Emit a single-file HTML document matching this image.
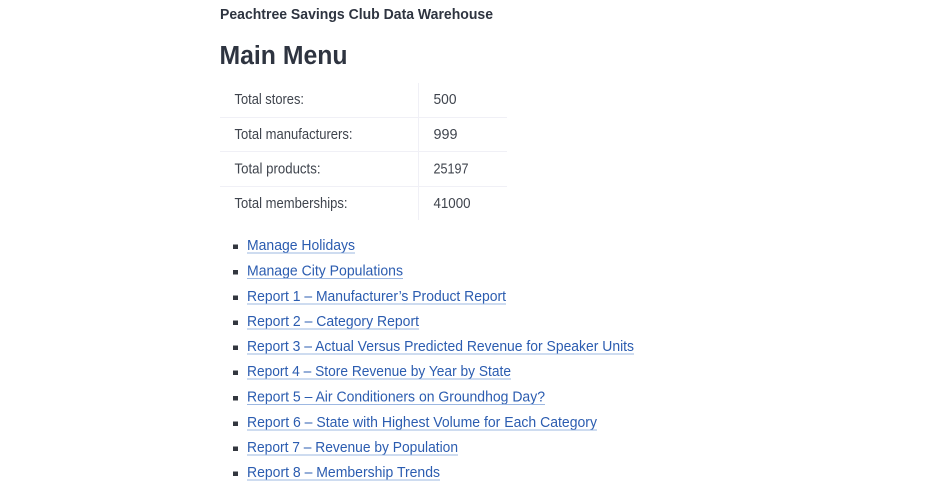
<!DOCTYPE html>
<html lang="en">
<head>
<meta charset="utf-8">
<title>Main Menu</title>
<style>
html,body{margin:0;padding:0;background:#fff;width:925px;height:500px;overflow:hidden}
svg{display:block}
text{font-family:"Liberation Sans",Arial,sans-serif}
.b{font-weight:700;fill:#2e3440}
.t{font-size:14.5px;fill:#3f444d}
.l{font-size:15px;fill:#2b5cb0}
.u{stroke:#9db8e2;stroke-width:1}
.g{stroke:#f0f0f6;stroke-width:1}
.s{fill:#33373f}
</style>
</head>
<body>
<svg width="925" height="500" viewBox="0 0 925 500" xmlns="http://www.w3.org/2000/svg">
<text class="b" x="220" y="19" font-size="14.5" textLength="273" lengthAdjust="spacingAndGlyphs">Peachtree Savings Club Data Warehouse</text>
<text class="b" x="219.500" y="64" font-size="25.5" textLength="128" lengthAdjust="spacingAndGlyphs">Main Menu</text>

<path class="g" d="M220 117.500H507M220 151.500H507M220 186.500H507M418.500 83V220" fill="none"/>
<text class="t" x="234.500" y="104" textLength="69.500" lengthAdjust="spacingAndGlyphs">Total stores:</text>
<text class="t" x="433.500" y="104" textLength="23" lengthAdjust="spacingAndGlyphs">500</text>
<text class="t" x="234.500" y="139" textLength="118" lengthAdjust="spacingAndGlyphs">Total manufacturers:</text>
<text class="t" x="433.500" y="139" textLength="24" lengthAdjust="spacingAndGlyphs">999</text>
<text class="t" x="234.500" y="173.500" textLength="86" lengthAdjust="spacingAndGlyphs">Total products:</text>
<text class="t" x="433.500" y="173.500" textLength="35" lengthAdjust="spacingAndGlyphs">25197</text>
<text class="t" x="234.500" y="208" textLength="113" lengthAdjust="spacingAndGlyphs">Total memberships:</text>
<text class="t" x="433.500" y="208" textLength="37" lengthAdjust="spacingAndGlyphs">41000</text>

<rect class="s" x="233" y="244.500" width="5" height="4.500"/>
<text class="l" x="247" y="250" textLength="108" lengthAdjust="spacingAndGlyphs">Manage Holidays</text>
<path class="u" d="M247 253H355"/>
<rect class="s" x="233" y="270" width="5" height="4.500"/>
<text class="l" x="247" y="275.500" textLength="156" lengthAdjust="spacingAndGlyphs">Manage City Populations</text>
<path class="u" d="M247 278.500H403"/>
<rect class="s" x="233" y="295.500" width="5" height="4.500"/>
<text class="l" x="247" y="301" textLength="259" lengthAdjust="spacingAndGlyphs">Report 1 – Manufacturer’s Product Report</text>
<path class="u" d="M247 304H506"/>
<rect class="s" x="233" y="320.500" width="5" height="4.500"/>
<text class="l" x="247" y="326" textLength="172" lengthAdjust="spacingAndGlyphs">Report 2 – Category Report</text>
<path class="u" d="M247 329H419"/>
<rect class="s" x="233" y="345.500" width="5" height="4.500"/>
<text class="l" x="247" y="351" textLength="387" lengthAdjust="spacingAndGlyphs">Report 3 – Actual Versus Predicted Revenue for Speaker Units</text>
<path class="u" d="M247 354H634"/>
<rect class="s" x="233" y="370.500" width="5" height="4.500"/>
<text class="l" x="247" y="376" textLength="264" lengthAdjust="spacingAndGlyphs">Report 4 – Store Revenue by Year by State</text>
<path class="u" d="M247 379H511"/>
<rect class="s" x="233" y="396" width="5" height="4.500"/>
<text class="l" x="247" y="401.500" textLength="298" lengthAdjust="spacingAndGlyphs">Report 5 – Air Conditioners on Groundhog Day?</text>
<path class="u" d="M247 404.500H545"/>
<rect class="s" x="233" y="421.500" width="5" height="4.500"/>
<text class="l" x="247" y="427" textLength="350" lengthAdjust="spacingAndGlyphs">Report 6 – State with Highest Volume for Each Category</text>
<path class="u" d="M247 430H597"/>
<rect class="s" x="233" y="446.500" width="5" height="4.500"/>
<text class="l" x="247" y="452" textLength="211" lengthAdjust="spacingAndGlyphs">Report 7 – Revenue by Population</text>
<path class="u" d="M247 455H458"/>
<rect class="s" x="233" y="471.500" width="5" height="4.500"/>
<text class="l" x="247" y="477" textLength="193" lengthAdjust="spacingAndGlyphs">Report 8 – Membership Trends</text>
<path class="u" d="M247 480H440"/>
</svg>
</body>
</html>
